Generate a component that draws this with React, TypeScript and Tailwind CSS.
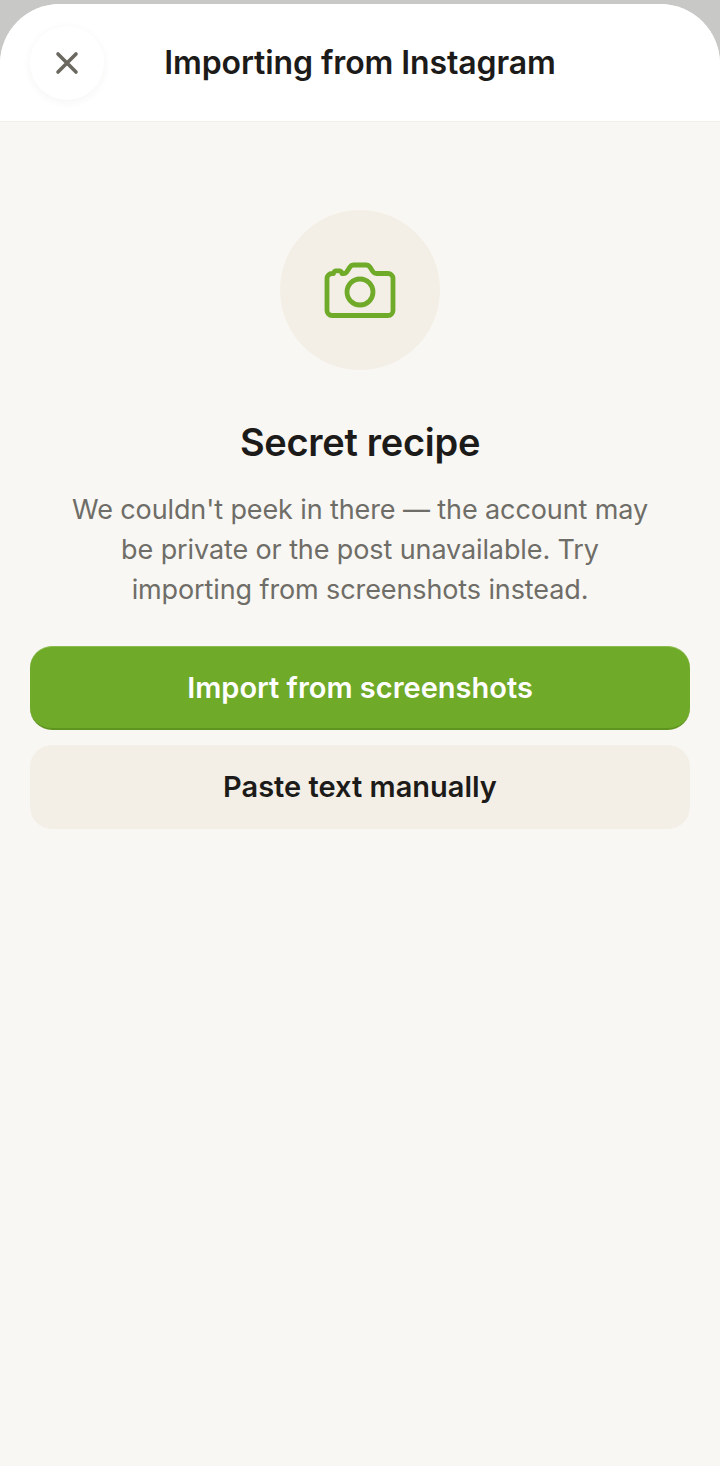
import React from "react";

function CameraIcon() {
  return (
    <svg width="72" height="56" viewBox="0 0 72 56" fill="none" stroke="#70aa29" strokeWidth="4.8" strokeLinejoin="round" strokeLinecap="round">
      <path d="M3 16.5a5 5 0 0 1 5-5h1.5c.4-2 1.2-2.7 2.6-2.7h3.2c1.4 0 2.2.7 2.6 2.7h2.3c1 0 1.8-.5 2.4-1.4l3.4-5.2c.8-1.2 1.9-1.9 3.4-1.9h13c1.5 0 2.6.7 3.4 1.9l3.2 4.9c.8 1.2 1.8 1.7 3.2 1.7H64a5 5 0 0 1 5 5v32a5 5 0 0 1-5 5H8a5 5 0 0 1-5-5z" />
      <circle cx="36" cy="30" r="13" />
    </svg>
  );
}

export default function App() {
  return (
    <div className="h-[1466px] w-[720px] overflow-hidden bg-[#c8c8c6] pt-1 font-['Inter',sans-serif]">
      <div className="flex h-full flex-col overflow-hidden rounded-t-[60px] bg-[#f8f7f3]">
        <header className="flex h-[118px] shrink-0 items-center border-b border-[#f1efea] bg-white pl-[30px] pr-[30px]">
          <button className="flex h-[74px] w-[74px] shrink-0 items-center justify-center rounded-full bg-white shadow-[0_2px_8px_rgba(60,50,30,0.05)]">
            <svg width="26" height="26" viewBox="0 0 26 26" fill="none" stroke="#6b6860" strokeWidth="3.6" strokeLinecap="round">
              <path d="M4 4l18 18M22 4L4 22" />
            </svg>
          </button>
          <h1 className="flex-1 pr-[74px] text-center text-[32px] font-semibold leading-10 tracking-[-0.1px] text-[#1c1b19]">
            Importing from Instagram
          </h1>
        </header>

        <main className="flex flex-col items-center px-[30px] pt-[88px]">
          <div className="flex h-[160px] w-[160px] items-center justify-center rounded-full bg-[#f3efe7]">
            <CameraIcon />
          </div>
          <h2 className="mt-[48px] text-[38px] font-semibold leading-[48px] tracking-[-0.3px] text-[#1c1b19]">
            Secret recipe
          </h2>
          <p className="mt-[24px] w-[600px] text-center text-[27px] leading-10 tracking-[-0.11px] text-[#6f6d67]">
            We couldn't peek in there — the account may be private or the post unavailable. Try importing from screenshots instead.
          </p>
          <button className="mt-[36px] h-[84px] w-full rounded-[22px] border-t border-b-2 border-t-[#8cbc50] border-b-[#5f9420] bg-[#70aa29] pt-px text-[29px] font-semibold text-white">
            Import from screenshots
          </button>
          <button className="mt-[15px] h-[84px] w-full rounded-[22px] bg-[#f3efe7] text-[29px] font-semibold text-[#1c1b19]">
            Paste text manually
          </button>
        </main>
      </div>
    </div>
  );
}
